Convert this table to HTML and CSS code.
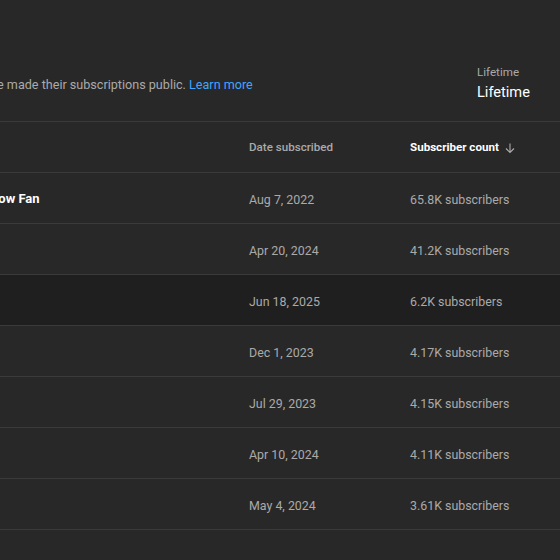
FILE: index.html
```html
<!DOCTYPE html>
<html>
<head>
<meta charset="utf-8">
<link rel="stylesheet" href="styles.css">
</head>
<body>
<div class="page">
  <div class="top">
    <p class="info">Only showing subscribers who have made their subscriptions public. <a class="link" href="#">Learn more</a></p>
    <div class="filter">
      <div class="filter-label">Lifetime</div>
      <div class="filter-value">Lifetime</div>
    </div>
  </div>
  <div class="table">
    <div class="row head">
      <div class="c-name"></div>
      <div class="c-date">Date subscribed</div>
      <div class="c-count sorted">Subscriber count
        <svg class="arrow" width="12" height="12" viewBox="0 0 12 12"><path d="M6 1.5v9M2 6.5l4 4 4-4" fill="none" stroke="#aaa" stroke-width="1.1"/></svg>
      </div>
    </div>
    <div class="row">
      <div class="c-name name">Rainbow Fan</div>
      <div class="c-date">Aug 7, 2022</div>
      <div class="c-count">65.8K subscribers</div>
    </div>
    <div class="row">
      <div class="c-name name"></div>
      <div class="c-date">Apr 20, 2024</div>
      <div class="c-count">41.2K subscribers</div>
    </div>
    <div class="row hover">
      <div class="c-name name"></div>
      <div class="c-date">Jun 18, 2025</div>
      <div class="c-count">6.2K subscribers</div>
    </div>
    <div class="row">
      <div class="c-name name"></div>
      <div class="c-date">Dec 1, 2023</div>
      <div class="c-count">4.17K subscribers</div>
    </div>
    <div class="row">
      <div class="c-name name"></div>
      <div class="c-date">Jul 29, 2023</div>
      <div class="c-count">4.15K subscribers</div>
    </div>
    <div class="row">
      <div class="c-name name"></div>
      <div class="c-date">Apr 10, 2024</div>
      <div class="c-count">4.11K subscribers</div>
    </div>
    <div class="row">
      <div class="c-name name"></div>
      <div class="c-date">May 4, 2024</div>
      <div class="c-count">3.61K subscribers</div>
    </div>
    <div class="row">
      <div class="c-name name"></div>
      <div class="c-date"></div>
      <div class="c-count"></div>
    </div>
  </div>
</div>
</body>
</html>
```
FILE: styles.css
```css
html, body {
  margin: 0;
  padding: 0;
  background: #282828;
  overflow: hidden;
}
body {
  font-family: Roboto, "Noto Sans", Arial, sans-serif;
  color: #aaaaaa;
  width: 560px;
  height: 560px;
}
.page {
  width: 560px;
  overflow: hidden;
}
.top {
  height: 122px;
  box-sizing: border-box;
  padding-top: 63px;
  display: flex;
  border-bottom: 1px solid #3a3a3a;
}
.info {
  margin: 13px 0 0 -196px;
  flex: 1;
  font-size: 12.6px;
  line-height: 18px;
  color: #aaaaaa;
  white-space: nowrap;
}
.link {
  color: #3ea6ff;
  text-decoration: none;
}
.filter {
  width: 83px;
  flex: none;
  padding-top: 1px;
}
.filter-label {
  font-size: 11.6px;
  line-height: 16px;
  color: #aaaaaa;
}
.filter-value {
  font-size: 14.6px;
  line-height: 20px;
  color: #ffffff;
  margin-top: 2px;
}
.table {
  margin-left: -35px;
}
.row {
  display: flex;
  align-items: center;
  height: 50px;
  border-bottom: 1px solid #3a3a3a;
  font-size: 12.4px;
  white-space: nowrap;
}
.row.hover {
  background: #1f1f1f;
}
.c-name {
  width: 284px;
  flex: none;
}
.name {
  color: #ffffff;
  font-weight: 700;
  font-size: 13px;
  padding-top: 1px;
}
.c-date {
  width: 161px;
  flex: none;
}
.row .c-date, .row .c-count {
  padding-top: 2px;
}
.c-count {
  flex: 1;
  display: flex;
  align-items: center;
  gap: 5px;
}
.head {
  font-size: 11.6px;
  font-weight: 500;
}
.row.head .c-date, .row.head .c-count {
  padding-top: 0;
}
.sorted {
  color: #ffffff;
  font-weight: 700;
}
.arrow {
  display: block;
  margin-top: 2px;
}
```
